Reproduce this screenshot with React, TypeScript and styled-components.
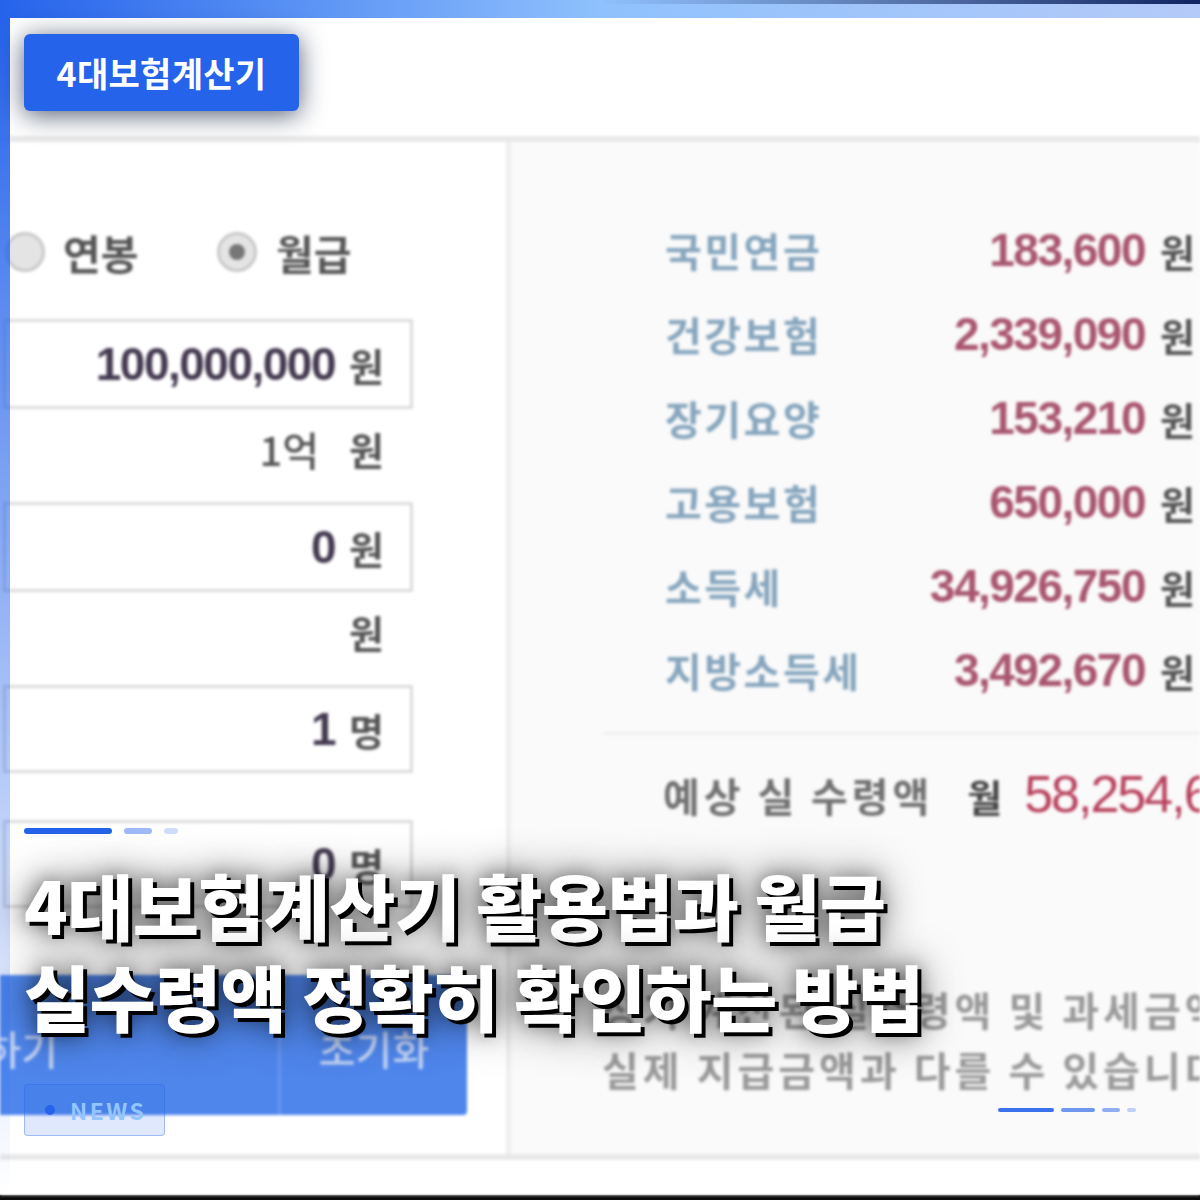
import React from "react";
import styled, { createGlobalStyle } from "styled-components";

const GlobalStyle = createGlobalStyle`
  html, body {
    margin: 0;
    padding: 0;
    background: #fff;
  }
  * {
    box-sizing: border-box;
  }
`;

const KR = `"Noto Sans CJK KR", "Noto Sans", sans-serif`;
const NUM = `"Liberation Sans", Arial, sans-serif`;

const Page = styled.div`
  position: relative;
  width: 1200px;
  height: 1200px;
  overflow: hidden;
  background: #fff;
  font-family: ${KR};
  display: flex;
  flex-direction: column;
`;

/* blurred screenshot of the calculator */
const Photo = styled.div`
  height: 1195px;
  padding-top: 18px;
  background: #fff;
  filter: blur(1.4px);
  display: flex;
  flex-direction: column;
`;

const BottomEdge = styled.div`
  height: 5px;
  background: #0a0a0a;
  box-shadow: 0 -1px 2px rgba(0, 0, 0, 0.5);
`;

const PhotoHeader = styled.div`
  height: 124px;
  border-bottom: 6px solid #e9e9e9;
`;

const PhotoBody = styled.div`
  height: 1018px;
  display: grid;
  grid-template-columns: 506px minmax(0, 1fr);
  border-bottom: 6px solid #e8e8e8;
`;

const InputPanel = styled.div`
  padding: 85px 93px 0 3px;
  display: flex;
  flex-direction: column;
  background: #fff;
`;

const RadioRow = styled.div`
  height: 50px;
  margin-bottom: 42px;
  display: flex;
  align-items: center;
`;

const RadioItem = styled.label`
  flex: none;
  width: 211px;
  display: flex;
  align-items: center;
  gap: 19px;
  padding-left: 3px;
  font-size: 41px;
  font-weight: 700;
  color: #555;
  &:first-child {
    padding-left: 2px;
    gap: 18px;
  }
`;

const Radio = styled.span<{ $checked?: boolean }>`
  width: 40px;
  height: 40px;
  border-radius: 50%;
  flex: none;
  display: flex;
  align-items: center;
  justify-content: center;
  background: #e4e4e4;
  border: 3px solid #c8c8c8;
  &::after {
    content: "";
    width: 16px;
    height: 16px;
    border-radius: 50%;
    background: ${(p) => (p.$checked ? "#777" : "transparent")};
  }
`;

const Field = styled.div<{ $h?: number; $mb?: number }>`
  height: ${(p) => p.$h ?? 90}px;
  margin-bottom: ${(p) => p.$mb ?? 0}px;
  border: 3px solid #dcdcdc;
  background: #fff;
  display: flex;
  align-items: center;
  justify-content: flex-end;
  gap: 14px;
  padding-right: 26px;
`;

const UnitRow = styled.div`
  height: 93px;
  padding-bottom: 14px;
  display: flex;
  align-items: center;
  justify-content: flex-end;
  gap: 30px;
  padding-right: 29px;
`;

const FieldValue = styled.span`
  font-family: ${NUM};
  font-size: 46px;
  font-weight: 700;
  letter-spacing: -1.5px;
  color: #443a50;
`;

const HintValue = styled.span`
  font-size: 40px;
  font-weight: 500;
  color: #555;
`;

const Unit = styled.span`
  font-size: 38px;
  font-weight: 700;
  color: #555;
`;

const ButtonRow = styled.div`
  margin: 0 -54px 0 -3px;
  height: 140px;
  display: grid;
  grid-template-columns: 278px 1fr;
  background: #4f86ec;
  border-radius: 0 0 4px 0;
`;

const PhotoButton = styled.div<{ $left?: boolean }>`
  padding: ${(p) => (p.$left ? "44px 220px 0 0" : "44px 0 0 0")};
  font-size: 40px;
  font-weight: 500;
  line-height: 58px;
  color: #c3d4f5;
  white-space: nowrap;
  direction: ${(p) => (p.$left ? "rtl" : "ltr")};
  text-align: ${(p) => (p.$left ? "right" : "center")};
  overflow: hidden;
  border-left: ${(p) => (p.$left ? "none" : "3px solid #6795ee")};
`;

const ResultPanel = styled.div`
  min-width: 0;
  overflow: hidden;
  background: #fafafa;
  border-left: 5px solid #efefef;
  padding-top: 66px;
  display: flex;
  flex-direction: column;
`;

const ResultList = styled.div`
  padding: 0 5px 0 154px;
`;

const ResultRow = styled.div`
  height: 84px;
  display: flex;
  align-items: center;
  justify-content: space-between;
`;

const ResultLabel = styled.span`
  font-size: 40px;
  font-weight: 700;
  letter-spacing: 2.5px;
  color: #86a5bd;
`;

const ResultAmount = styled.span`
  display: flex;
  align-items: center;
  gap: 15px;
`;

const ResultValue = styled.span`
  font-family: ${NUM};
  font-size: 46px;
  font-weight: 700;
  letter-spacing: -1.5px;
  color: #a9566f;
`;

const ResultDivider = styled.div`
  height: 3px;
  margin: 20px 0 0 93px;
  background: #efefef;
`;

const TotalRow = styled.div`
  margin-top: 28px;
  padding-left: 152px;
  height: 64px;
  display: flex;
  align-items: center;
  white-space: nowrap;
`;

const TotalLabel = styled.span`
  font-size: 40px;
  font-weight: 700;
  letter-spacing: 3.9px;
  color: #707070;
  margin-right: 34px;
`;

const TotalMonth = styled.span`
  font-size: 38px;
  font-weight: 700;
  color: #444;
  margin-right: 22px;
`;

const TotalValue = styled.span`
  font-family: ${NUM};
  font-size: 52px;
  letter-spacing: -2px;
  color: #b8405c;
`;

const Notice = styled.div`
  margin-top: 152px;
  padding-left: 91px;
  font-size: 40px;
  font-weight: 700;
  line-height: 60px;
  letter-spacing: 4px;
  color: #9a9a9a;
  white-space: nowrap;
`;

/* overlays on top of the picture */
const TopBar = styled.div`
  position: absolute;
  left: 0;
  top: 0;
  width: 100%;
  height: 18px;
  background: linear-gradient(90deg, #2563eb 0%, #8fc1fd 50%, #b4caf8 100%);
  &::after {
    content: "";
    position: absolute;
    left: 0;
    top: 0;
    width: 100%;
    height: 4px;
    background: linear-gradient(90deg, transparent 50%, #0f2460 100%);
  }
`;

const SideBar = styled.div`
  position: absolute;
  left: 0;
  top: 18px;
  width: 10px;
  height: 1177px;
  background: linear-gradient(180deg, #2563eb 0%, rgba(37, 99, 235, 0.28) 70%, rgba(37, 99, 235, 0) 100%);
`;

const Badge = styled.div`
  position: absolute;
  left: 24px;
  top: 34px;
  width: 275px;
  height: 77px;
  border-radius: 6px;
  background: #2563eb;
  box-shadow: 0 4px 26px rgba(15, 30, 60, 0.72);
  color: #fff;
  font-size: 34px;
  font-weight: 700;
  letter-spacing: 0.3px;
  display: flex;
  align-items: center;
  justify-content: center;
`;

const Pills = styled.div<{ $left: number; $top: number; $h: number; $gap: number }>`
  position: absolute;
  left: ${(p) => p.$left}px;
  top: ${(p) => p.$top}px;
  height: ${(p) => p.$h}px;
  display: flex;
  gap: ${(p) => p.$gap}px;
`;

const Pill = styled.span<{ $w: number; $o: number }>`
  width: ${(p) => p.$w}px;
  height: 100%;
  border-radius: 3px;
  background: #2563eb;
  opacity: ${(p) => p.$o};
`;

const Title = styled.h1`
  position: absolute;
  left: 24px;
  top: 858px;
  margin: 0;
  font-size: 72px;
  font-weight: 900;
  line-height: 91px;
  letter-spacing: -0.7px;
  color: #fff;
  white-space: nowrap;
  text-shadow: 4px 4px 0 #000, 0 0 40px rgba(0, 0, 0, 0.75), 0 0 18px rgba(0, 0, 0, 0.4);
  span {
    display: block;
  }
`;

const NewsTag = styled.div`
  position: absolute;
  left: 24px;
  top: 1084px;
  width: 141px;
  height: 52px;
  border: 1px solid rgba(37, 99, 235, 0.35);
  border-radius: 4px;
  background: rgba(37, 99, 235, 0.15);
  display: flex;
  align-items: center;
  gap: 15px;
  padding-left: 20px;
  font-size: 23px;
  font-weight: 700;
  letter-spacing: 2.4px;
  color: #93c5fd;
`;

const NewsDot = styled.span`
  width: 10px;
  height: 10px;
  border-radius: 50%;
  background: #2563eb;
`;

const results = [
  ["국민연금", "183,600"],
  ["건강보험", "2,339,090"],
  ["장기요양", "153,210"],
  ["고용보험", "650,000"],
  ["소득세", "34,926,750"],
  ["지방소득세", "3,492,670"],
];

const leftPills = [
  [88, 1],
  [28, 0.45],
  [14, 0.22],
];

const rightPills = [
  [56, 0.9],
  [34, 0.65],
  [18, 0.5],
  [9, 0.28],
];

export default function App() {
  return (
    <Page>
      <GlobalStyle />
      <Photo>
        <PhotoHeader />
        <PhotoBody>
          <InputPanel>
            <RadioRow>
              <RadioItem>
                <Radio />
                연봉
              </RadioItem>
              <RadioItem>
                <Radio $checked />
                월급
              </RadioItem>
            </RadioRow>
            <Field>
              <FieldValue>100,000,000</FieldValue>
              <Unit>원</Unit>
            </Field>
            <UnitRow>
              <HintValue>1억</HintValue>
              <Unit>원</Unit>
            </UnitRow>
            <Field>
              <FieldValue>0</FieldValue>
              <Unit>원</Unit>
            </Field>
            <UnitRow>
              <Unit>원</Unit>
            </UnitRow>
            <Field $h={88} $mb={47}>
              <FieldValue>1</FieldValue>
              <Unit>명</Unit>
            </Field>
            <Field $h={88} $mb={67}>
              <FieldValue>0</FieldValue>
              <Unit>명</Unit>
            </Field>
            <ButtonRow>
              <PhotoButton $left>계산하기</PhotoButton>
              <PhotoButton>초기화</PhotoButton>
            </ButtonRow>
          </InputPanel>
          <ResultPanel>
            <ResultList>
              {results.map(([label, value]) => (
                <ResultRow key={label}>
                  <ResultLabel>{label}</ResultLabel>
                  <ResultAmount>
                    <ResultValue>{value}</ResultValue>
                    <Unit>원</Unit>
                  </ResultAmount>
                </ResultRow>
              ))}
            </ResultList>
            <ResultDivider />
            <TotalRow>
              <TotalLabel>예상 실 수령액</TotalLabel>
              <TotalMonth>월</TotalMonth>
              <TotalValue>58,254,680 원</TotalValue>
            </TotalRow>
            <Notice>
              상기 계산된 실수령액 및 과세금액은
              <br />
              실제 지급금액과 다를 수 있습니다
            </Notice>
          </ResultPanel>
        </PhotoBody>
      </Photo>
      <BottomEdge />

      <TopBar />
      <SideBar />
      <Badge>4대보험계산기</Badge>
      <Pills $left={24} $top={828} $h={6} $gap={12}>
        {leftPills.map(([w, o]) => (
          <Pill key={w} $w={w} $o={o} />
        ))}
      </Pills>
      <Title>
        <span>4대보험계산기 활용법과 월급</span>
        <span>실수령액 정확히 확인하는 방법</span>
      </Title>
      <NewsTag>
        <NewsDot />
        NEWS
      </NewsTag>
      <Pills $left={998} $top={1108} $h={4} $gap={7}>
        {rightPills.map(([w, o]) => (
          <Pill key={w} $w={w} $o={o} />
        ))}
      </Pills>
    </Page>
  );
}
